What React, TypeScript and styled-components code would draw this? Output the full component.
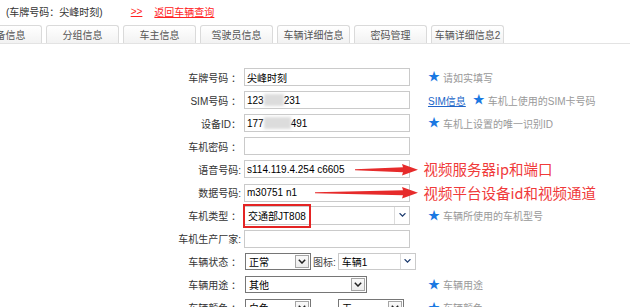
import styled, { createGlobalStyle } from 'styled-components';

const GlobalStyle = createGlobalStyle`
    body {
        margin: 0;
        background: #fff;
        font-family: "Liberation Sans", "Noto Sans CJK SC", sans-serif;
        font-size: 10px;
        color: #333;
    }
`

const Page = styled.div`
    width: 636px;
    height: 307px;
    overflow: hidden;
`

const Header = styled.div`
    height: 22px;
    display: flex;
    align-items: center;
    padding-left: 6px;
    color: #333;
`

const Back = styled.a<{ $gap: number }>`
    margin-left: ${props => props.$gap}px;
    color: #f22;
    text-decoration: underline;
    cursor: pointer;
`

const TabBar = styled.div`
    width: 630px;
    margin-top: 3px;
    border-bottom: 1px solid #e3e3e3;
    overflow: hidden;
`

const TabList = styled.div`
    display: flex;
    gap: 4px;
    margin-left: -31px;
`

const Tab = styled.div`
    flex-shrink: 0;
    width: 73px;
    height: 18px;
    box-sizing: border-box;
    border: 1px solid #dadada;
    border-bottom: none;
    border-radius: 3px 3px 0 0;
    background: linear-gradient(#fff, #f2f2f2);
    color: #555;
    display: flex;
    align-items: center;
    justify-content: center;
    white-space: nowrap;
`

const Form = styled.div`
    padding-top: 21.5px;
`

const Row = styled.div`
    position: relative;
    height: 23.1px;
    display: flex;
    align-items: center;
`

const Label = styled.div`
    width: 244px;
    box-sizing: border-box;
    padding-right: 3px;
    text-align: right;
    white-space: nowrap;
    color: #333;
`

const Field = styled.div`
    width: 184px;
    display: flex;
    align-items: center;
`

const TextBox = styled.div`
    width: 166px;
    height: 18px;
    box-sizing: border-box;
    border: 1px solid #cacaca;
    padding: 0 2px;
    display: flex;
    align-items: center;
    color: #000;
    white-space: nowrap;
`

const Blur = styled.span<{ $w: number }>`
    display: inline-block;
    width: ${props => props.$w}px;
    height: 12px;
    background: #dcdcdc;
    filter: blur(1.5px);
`

const Hint = styled.div`
    display: flex;
    align-items: center;
    gap: 3px;
    color: #999;
    white-space: nowrap;
`

const Star = styled.span`
    color: #1b78e2;
    font-size: 12px;
    line-height: 1;
`

const SimLink = styled.a`
    color: #2165c8;
    text-decoration: underline;
    margin-right: 4px;
`

const FlatSelect = styled.div<{ $w: number; $h: number }>`
    width: ${props => props.$w}px;
    height: ${props => props.$h}px;
    box-sizing: border-box;
    border: 1px solid #cacaca;
    background: #fff;
    display: flex;
    align-items: center;
    color: #000;
`

const ClassicSelect = styled.div<{ $w: number }>`
    width: ${props => props.$w}px;
    height: 17px;
    box-sizing: border-box;
    border: 1px solid #767676;
    background: #fff;
    display: flex;
    align-items: center;
    color: #000;
    margin-left: 1px;
`

const SelectText = styled.span`
    flex: 1;
    padding-left: 3px;
    white-space: nowrap;
`

const FlatButton = styled.span`
    width: 14px;
    align-self: stretch;
    border-left: 1px solid #dcdcdc;
    display: flex;
    align-items: center;
    justify-content: center;
`

const ClassicButton = styled.span`
    width: 14px;
    height: 13px;
    margin-right: 1px;
    box-sizing: border-box;
    border: 1px solid #a5a5a5;
    background: linear-gradient(#fafafa, #ececec);
    display: flex;
    align-items: center;
    justify-content: center;
`

const Inline = styled.span`
    margin: 0 2px;
    color: #444;
    white-space: nowrap;
`

const Spacer = styled.span<{ $w: number }>`
    width: ${props => props.$w}px;
`

const Highlight = styled.div`
    position: absolute;
    left: 243px;
    top: 0;
    width: 68px;
    height: 24px;
    box-sizing: border-box;
    border: 2px solid #e42424;
    pointer-events: none;
`

const Annotation = styled.div<{ $left: number }>`
    position: absolute;
    left: ${props => props.$left}px;
    top: 50%;
    transform: translateY(-50%);
    display: flex;
    align-items: center;
    gap: 5.5px;
    pointer-events: none;
`

const AnnotationText = styled.span`
    color: #f03a3a;
    font-family: "Noto Sans CJK SC", "Liberation Sans", sans-serif;
    font-size: 14.5px;
    white-space: nowrap;
    line-height: 1;
`

function FlatChevron() {
    return (
        <svg width="7" height="5" viewBox="0 0 7 5">
            <path d="M0 0.5 L3.5 4 L7 0.5 L5.8 0 L3.5 2.3 L1.2 0 Z" fill="#1f3d70" />
        </svg>
    )
}

function ClassicChevron() {
    return (
        <svg width="8" height="5" viewBox="0 0 8 5">
            <polyline points="0.8,0.8 4,4 7.2,0.8" fill="none" stroke="#222" strokeWidth="1.5" />
        </svg>
    )
}

function RedArrow({ width }: { width: number }) {
    const head = width - 15;
    return (
        <svg width={width} height="14" viewBox={`0 0 ${width} 14`}>
            <path
                d={`M0 6.6 L${head} 4.6 L${head - 1} 1.2 L${width} 7 L${head - 1} 12.8 L${head} 9.4 L0 7.4 Z`}
                fill="#e62b2b"
            />
        </svg>
    )
}

function Flat({ value, w, h }: { value: string; w: number; h: number }) {
    return (
        <FlatSelect $w={w} $h={h}>
            <SelectText>{value}</SelectText>
            <FlatButton><FlatChevron /></FlatButton>
        </FlatSelect>
    )
}

function Classic({ value, w }: { value: string; w: number }) {
    return (
        <ClassicSelect $w={w}>
            <SelectText>{value}</SelectText>
            <ClassicButton><ClassicChevron /></ClassicButton>
        </ClassicSelect>
    )
}

const tabs = ['设备信息', '分组信息', '车主信息', '驾驶员信息', '车辆详细信息', '密码管理', '车辆详细信息2'];

export default function App() {
    return <>
        <GlobalStyle />
        <Page>
            <Header>
                <span>(车牌号码：尖峰时刻)</span>
                <Back $gap={28}>&gt;&gt;</Back>
                <Back $gap={12}>返回车辆查询</Back>
            </Header>
            <TabBar>
                <TabList>
                    {tabs.map(t => <Tab key={t}>{t}</Tab>)}
                </TabList>
            </TabBar>
            <Form>
                <Row>
                    <Label>车牌号码 ：</Label>
                    <Field><TextBox>尖峰时刻</TextBox></Field>
                    <Hint><Star>★</Star>请如实填写</Hint>
                </Row>
                <Row>
                    <Label>SIM号码 ：</Label>
                    <Field><TextBox>123<Blur $w={20} />231</TextBox></Field>
                    <Hint><SimLink>SIM信息</SimLink><Star>★</Star>车机上使用的SIM卡号码</Hint>
                </Row>
                <Row>
                    <Label>设备ID：</Label>
                    <Field><TextBox>177<Blur $w={27} />491</TextBox></Field>
                    <Hint><Star>★</Star>车机上设置的唯一识别ID</Hint>
                </Row>
                <Row>
                    <Label>车机密码 ：</Label>
                    <Field><TextBox /></Field>
                </Row>
                <Row>
                    <Label>语音号码:</Label>
                    <Field><TextBox>s114.119.4.254 c6605</TextBox></Field>
                    <Annotation $left={355}>
                        <RedArrow width={63} />
                        <AnnotationText>视频服务器ip和端口</AnnotationText>
                    </Annotation>
                </Row>
                <Row>
                    <Label>数据号码:</Label>
                    <Field><TextBox>m30751 n1</TextBox></Field>
                    <Annotation $left={315}>
                        <RedArrow width={103} />
                        <AnnotationText>视频平台设备id和视频通道</AnnotationText>
                    </Annotation>
                </Row>
                <Row>
                    <Label>车机类型 ：</Label>
                    <Field><Flat value="交通部JT808" w={166} h={19} /></Field>
                    <Hint><Star>★</Star>车辆所使用的车机型号</Hint>
                    <Highlight />
                </Row>
                <Row>
                    <Label>车机生产厂家:</Label>
                    <Field><TextBox /></Field>
                </Row>
                <Row>
                    <Label>车辆状态 ：</Label>
                    <Field>
                        <Classic value="正常" w={66} />
                        <Inline>图标:</Inline>
                        <Flat value="车辆1" w={78} h={17} />
                    </Field>
                </Row>
                <Row>
                    <Label>车辆用途 ：</Label>
                    <Field><Classic value="其他" w={122} /></Field>
                    <Hint><Star>★</Star>车辆用途</Hint>
                </Row>
                <Row>
                    <Label>车辆颜色 ：</Label>
                    <Field>
                        <Classic value="白色" w={66} />
                        <Spacer $w={26} />
                        <Classic value="无" w={66} />
                    </Field>
                    <Hint><Star>★</Star>车辆颜色</Hint>
                </Row>
            </Form>
        </Page>
    </>
}
